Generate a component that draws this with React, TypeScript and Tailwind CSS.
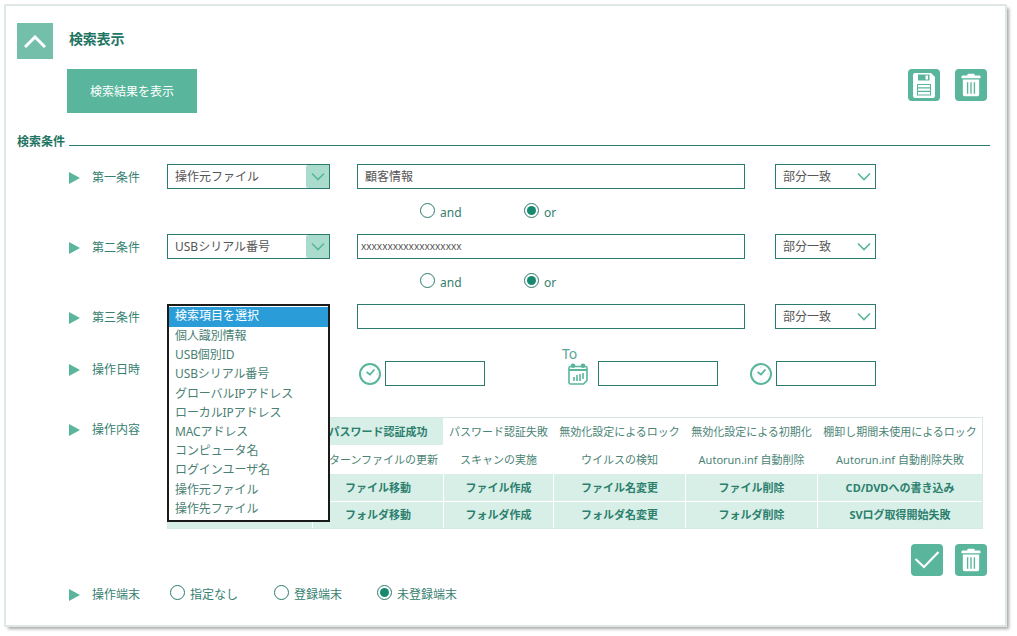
const Tri = () => (
  <svg width="11" height="12" viewBox="0 0 11 12" className="shrink-0"><path d="M0 0L11 6L0 12Z" fill="#59b59b" /></svg>
);

const Chevron = () => (
  <svg width="16" height="10" viewBox="0 0 16 10" fill="none" stroke="#59b59b" strokeWidth="1.6"><path d="M2 1.500L8 7.500L14 1.500" /></svg>
);

const Label = ({ children }: { children: string }) => (
  <div className="flex items-center w-[98px] shrink-0 h-[18px] pt-[2px]">
    <Tri />
    <span className="ml-3 text-[12px] leading-4 text-[#35806f]">{children}</span>
  </div>
);

const Box = ({ className, children }: { className: string; children?: React.ReactNode }) => (
  <div className={`h-[25px] border border-[#2b7a6d] bg-white shrink-0 ${className}`}>{children}</div>
);

const FieldSelect = ({ value }: { value?: string }) => (
  <Box className="w-[163px] flex items-center justify-between pl-[7px]">
    <span className="text-[12px] text-[#555]">{value}</span>
    <span className="w-[23px] h-full bg-[#a9dccd] flex items-center justify-center rounded-l-[2px]">
      <Chevron />
    </span>
  </Box>
);

const MatchSelect = () => (
  <Box className="w-[101px] flex items-center justify-between pl-[7px] pr-[3px] ml-[30px]">
    <span className="text-[12px] text-[#555]">部分一致</span>
    <Chevron />
  </Box>
);

const Radio = ({ checked, label, className }: { checked?: boolean; label: string; className: string }) => (
  <div className={`flex items-start ${className}`}>
    <span className="w-[15px] h-[15px] rounded-full border border-[#2b7a6d] bg-white flex items-center justify-center shrink-0">
      {checked && <span className="w-[9px] h-[9px] rounded-full bg-[#17896f]" />}
    </span>
    <span className="ml-[5px] mt-[2px] text-[12px] leading-4 text-[#35806f] whitespace-nowrap">{label}</span>
  </div>
);

const AndOr = () => (
  <div className="h-[45px] pl-[403px] pt-[14px] flex items-start">
    <Radio label="and" className="w-[104px]" />
    <Radio checked label="or" className="" />
  </div>
);

const Trash = () => (
  <button className="w-8 h-8 rounded-[4px] bg-[#59b59b] flex items-center justify-center">
    <svg width="20" height="26" viewBox="0 0 22 28" fill="#fff">
      <path d="M8 1.500h6a1 1 0 0 1 1 1V3.500h5a1.500 1.500 0 0 1 1.500 1.500v1.500H.5V5A1.500 1.500 0 0 1 2 3.500h5V2.500a1 1 0 0 1 1-1z" />
      <path fillRule="evenodd" d="M2 8h18v16.500a2 2 0 0 1-2 2H4a2 2 0 0 1-2-2zM6.500 11v12.500H8V11zM10.250 11v12.500h1.500V11zM14 11v12.500h1.500V11z" />
    </svg>
  </button>
);

const Save = () => (
  <button className="w-8 h-8 rounded-[4px] bg-[#59b59b] flex items-center justify-center">
    <svg width="22" height="25" viewBox="0 0 22 25">
      <path fillRule="evenodd" fill="#fff" d="M2 0h16l4 4v19a2 2 0 0 1-2 2H2a2 2 0 0 1-2-2V2a2 2 0 0 1 2-2zM5 1.500v6h11.500v-6zM4 11v11.500h14V11z" />
      <path fill="#fff" d="M12.500 2.500h2.500v4h-2.500zM5 12h12v2.300H5zM5 15.500h12v2.300H5zM5 19h12v2.500H5z" />
    </svg>
  </button>
);

const Clock = ({ className = "" }: { className?: string }) => (
  <svg width="22" height="22" viewBox="0 0 22 22" fill="none" stroke="#59b59b" className={`shrink-0 ${className}`}>
    <circle cx="11" cy="11" r="10" strokeWidth="2" />
    <path d="M7.500 9L11 11.500L15.500 6.500" strokeWidth="1.800" />
    <path d="M11 3.500v1M11 17.500v1M3.500 11h1M17.500 11h1" strokeWidth="1" strokeOpacity="0.6" />
  </svg>
);

const Calendar = () => (
  <svg width="20" height="22" viewBox="0 0 20 22" className="shrink-0">
    <path fill="none" stroke="#59b59b" strokeWidth="1.600" d="M2.500 3.500h15a1.500 1.500 0 0 1 1.500 1.500v12.500l-3.500 3.500h-13a1.500 1.500 0 0 1-1.500-1.500V5a1.500 1.500 0 0 1 1.500-1.500z" />
    <path fill="#59b59b" d="M1 6h18v2H1z" />
    <circle cx="5" cy="2.800" r="2.300" fill="#59b59b" />
    <circle cx="15" cy="2.800" r="2.300" fill="#59b59b" />
    <path fill="#59b59b" opacity="0.8" d="M5 14h2v4H5zM8 12h2v6H8zM11 11h2v7h-2zM14 10h2v6h-2z" />
  </svg>
);

const cols = ["", "パスワード認証成功", "パスワード認証失敗", "無効化設定によるロック", "無効化設定による初期化", "棚卸し期間未使用によるロック"];
const row2 = ["", "パターンファイルの更新", "スキャンの実施", "ウイルスの検知", "Autorun.inf 自動削除", "Autorun.inf 自動削除失敗"];
const row3 = ["", "ファイル移動", "ファイル作成", "ファイル名変更", "ファイル削除", "CD/DVDへの書き込み"];
const row4 = ["", "フォルダ移動", "フォルダ作成", "フォルダ名変更", "フォルダ削除", "SVログ取得開始失敗"];

const Cell = ({ text, on, last }: { text: string; on: boolean; last?: boolean }) => (
  <div className={`flex items-center justify-center whitespace-nowrap text-[11px] pt-px ${last ? "h-[26px]" : "h-[27px]"} ${on ? "bg-[#d8efe8] font-bold text-[#2c7f6d]" : "bg-white text-[#4b8476]"}`}>
    {text}
  </div>
);

const options = ["個人識別情報", "USB個別ID", "USBシリアル番号", "グローバルIPアドレス", "ローカルIPアドレス", "MACアドレス", "コンピュータ名", "ログインユーザ名", "操作元ファイル", "操作先ファイル"];

export default function App() {
  return (
    <div className="w-[1017px] h-[636px] bg-white overflow-hidden pt-[5px] pl-[5px] font-['Noto_Sans','Noto_Sans_CJK_JP',sans-serif]">
      <div className="w-[1001px] h-[621px] bg-white border border-[#d6e9e4] shadow-[0_0_0_1px_#e6e6e6,3px_3px_3px_#a9a9a9] pt-[17px] pl-[11px] pr-[15px]">
        <div className="flex items-center h-9">
          <button className="w-9 h-9 bg-[#74bfa9] flex items-center justify-center">
            <svg width="22" height="13" viewBox="0 0 22 13" fill="none" stroke="#fff" strokeWidth="3"><path d="M1 12L11 2L21 12" /></svg>
          </button>
          <span className="ml-4 pb-[6px] text-[14px] tracking-[-0.2px] font-bold text-[#1f7563]">検索表示</span>
        </div>

        <div className="mt-[10px] pl-[50px] pr-[3px] flex justify-between items-start h-11">
          <button className="w-[130px] h-11 pt-px bg-[#59b59b] text-white text-[12px]">検索結果を表示</button>
          <div className="flex gap-[15px]"><Save /><Trash /></div>
        </div>

        <div className="mt-5 h-4 flex items-start">
          <span className="text-[12px] leading-[18px] font-bold text-[#1f7563] w-[52px]">検索条件</span>
          <div className="flex-1 h-px mt-3 bg-[#2b7a6d]" />
        </div>

        <div className="mt-[15px] pl-[52px] flex items-center">
          <Label>第一条件</Label>
          <FieldSelect value="操作元ファイル" />
          <Box className="w-[388px] ml-[27px] flex items-center pl-[7px] text-[12px] text-[#555]">顧客情報</Box>
          <MatchSelect />
        </div>
        <AndOr />

        <div className="pl-[52px] flex items-center">
          <Label>第二条件</Label>
          <FieldSelect value="USBシリアル番号" />
          <Box className="w-[388px] ml-[27px] flex items-center pl-[3px] text-[10px] text-[#555]">xxxxxxxxxxxxxxxxxxx</Box>
          <MatchSelect />
        </div>
        <AndOr />

        <div className="pl-[52px] flex items-center">
          <Label>第三条件</Label>
          <div className="relative shrink-0">
            <FieldSelect />
            <div className="absolute z-10 left-0 top-0 w-[163px] border-2 border-[#1a1a1a] bg-white pb-[1px]">
              <div className="h-5 mt-px bg-[#2a9dd8] text-white text-[12px] leading-[18px] pl-[6px]">検索項目を選択</div>
              {options.map((o) => (
                <div key={o} className="h-[19.200px] text-[12px] leading-[17px] pl-[6px] text-[#4a7f74] whitespace-nowrap tracking-[-0.1px]">{o}</div>
              ))}
            </div>
          </div>
          <Box className="w-[388px] ml-[27px]" />
          <MatchSelect />
        </div>

        <div className="mt-8 pl-[52px] flex items-start h-[25px]">
          <div className="-mt-px"><Label>操作日時</Label></div>
          <div className="w-[318px] flex items-center justify-end h-[25px] shrink-0">
            <Clock className="mr-[4px]" />
            <Box className="w-[100px]" />
          </div>
          <div className="relative flex items-center h-[25px] ml-[83px] shrink-0">
            <span className="absolute left-[-6px] top-[-15px] text-[14px] leading-4 text-[#59a593]">To</span>
            <Calendar />
            <Box className="w-[120px] ml-[10px]" />
          </div>
          <div className="flex items-center h-[25px] ml-[32px] shrink-0">
            <Clock className="mr-[4px]" />
            <Box className="w-[100px]" />
          </div>
        </div>

        <div className="mt-[31px] pl-[52px] flex items-start">
          <div className="mt-[3px]"><Label>操作内容</Label></div>
          <div className="w-[816px] border border-[#d6e9e4] bg-white grid grid-cols-[144px_130px_109px_131px_131px_164px] gap-px">
            {cols.map((t, i) => <Cell key={i} text={t} on={i < 2} />)}
            {row2.map((t, i) => <Cell key={i} text={t} on={false} />)}
            {row3.map((t, i) => <Cell key={i} text={t} on />)}
            {row4.map((t, i) => <Cell key={i} text={t} on last />)}
          </div>
        </div>

        <div className="mt-[15px] pr-[3px] flex justify-end gap-3">
          <button className="w-8 h-8 rounded-[4px] bg-[#59b59b] flex items-center justify-center">
            <svg width="26" height="20" viewBox="0 0 26 20" fill="none" stroke="#fff" strokeWidth="2.200"><path d="M1.500 9L10 17L24.500 2" /></svg>
          </button>
          <Trash />
        </div>

        <div className="mt-[10px] pl-[52px] flex items-center h-4">
          <Label>操作端末</Label>
          <Radio label="指定なし" className="w-[104px] ml-[3px] self-start -mt-px" />
          <Radio label="登録端末" className="w-[103px] self-start -mt-px" />
          <Radio checked label="未登録端末" className="self-start -mt-px" />
        </div>
      </div>
    </div>
  );
}
